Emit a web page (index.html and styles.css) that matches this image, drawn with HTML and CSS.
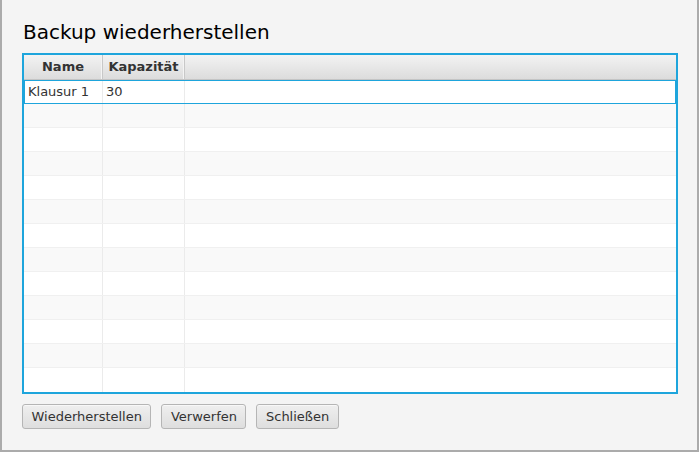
FILE: index.html
```html
<!DOCTYPE html>
<html lang="de">
<head>
<meta charset="utf-8">
<title>Backup wiederherstellen</title>
<link rel="stylesheet" href="styles.css">
</head>
<body>
<div class="window">
  <h1 class="title">Backup wiederherstellen</h1>
  <div class="table">
    <div class="thead">
      <div class="th col-name">Name</div>
      <div class="th col-cap">Kapazität</div>
      <div class="th col-fill"></div>
    </div>
    <div class="tbody">
      <div class="row selected"><div class="td col-name">Klausur 1</div><div class="td col-cap">30</div><div class="td col-fill"></div></div>
      <div class="row odd"><div class="td col-name"></div><div class="td col-cap"></div><div class="td col-fill"></div></div>
      <div class="row"><div class="td col-name"></div><div class="td col-cap"></div><div class="td col-fill"></div></div>
      <div class="row odd"><div class="td col-name"></div><div class="td col-cap"></div><div class="td col-fill"></div></div>
      <div class="row"><div class="td col-name"></div><div class="td col-cap"></div><div class="td col-fill"></div></div>
      <div class="row odd"><div class="td col-name"></div><div class="td col-cap"></div><div class="td col-fill"></div></div>
      <div class="row"><div class="td col-name"></div><div class="td col-cap"></div><div class="td col-fill"></div></div>
      <div class="row odd"><div class="td col-name"></div><div class="td col-cap"></div><div class="td col-fill"></div></div>
      <div class="row"><div class="td col-name"></div><div class="td col-cap"></div><div class="td col-fill"></div></div>
      <div class="row odd"><div class="td col-name"></div><div class="td col-cap"></div><div class="td col-fill"></div></div>
      <div class="row"><div class="td col-name"></div><div class="td col-cap"></div><div class="td col-fill"></div></div>
      <div class="row odd"><div class="td col-name"></div><div class="td col-cap"></div><div class="td col-fill"></div></div>
      <div class="row last"><div class="td col-name"></div><div class="td col-cap"></div><div class="td col-fill"></div></div>
    </div>
  </div>
  <div class="buttons">
    <button class="btn">Wiederherstellen</button>
    <button class="btn">Verwerfen</button>
    <button class="btn">Schließen</button>
  </div>
</div>
</body>
</html>
```

FILE: styles.css
```css
* { box-sizing: border-box; }
html, body {
  margin: 0;
  padding: 0;
  background: #f4f4f4;
}
body {
  font-family: "DejaVu Sans", sans-serif;
  font-size: 13px;
  color: #333333;
}
.window {
  width: 699px;
  height: 452px;
  border-left: 2px solid #ababab;
  border-right: 2px solid #ababab;
  border-bottom: 2px solid #ababab;
  padding: 21px 0 0 20px;
  background: #f4f4f4;
}
.title {
  margin: 0;
  font-size: 20px;
  font-weight: normal;
  line-height: 22px;
  color: #000000;
  padding-left: 1px;
}
.table {
  margin-top: 10px;
  width: 656px;
  height: 341px;
  border: 2px solid #1ea5dc;
  background: #ffffff;
  display: flex;
  flex-direction: column;
}
.thead {
  display: flex;
  height: 25px;
  background: linear-gradient(#f3f3f3, #dcdcdc);
  border-bottom: 1px solid #c4c4c4;
}
.th {
  font-weight: bold;
  color: #333333;
  text-align: center;
  line-height: 24px;
  border-right: 1px solid #c8c8c8;
  box-shadow: inset -1px 0 0 #f4f4f4;
}
.th.col-fill { border-right: none; box-shadow: none; }
.col-name { width: 79px; flex: none; }
.col-cap { width: 82px; flex: none; }
.col-fill { flex: 1; }
.tbody {
  display: flex;
  flex-direction: column;
}
.row {
  display: flex;
  height: 24px;
  background: #ffffff;
  border-bottom: 1px solid #f0f0f0;
}
.row.odd { background: #f9f9f9; }
.row.last { border-bottom: none; }
.td {
  border-right: 1px solid #ebebeb;
  padding-left: 4px;
  line-height: 22px;
  color: #333333;
  white-space: nowrap;
}
.td.col-fill { border-right: none; }
.row.selected {
  border: 1px solid #1ea5dc;
  background: #ffffff;
}
.row.selected .td { line-height: 21px; padding-left: 3px; }
.row.selected .col-name { width: 78px; }
.buttons {
  display: flex;
  gap: 10px;
  margin-top: 10px;
}
.btn {
  font-family: "DejaVu Sans", sans-serif;
  font-size: 13px;
  color: #333333;
  height: 25px;
  padding: 0 8.5px;
  border: 1px solid #b5b5b5;
  border-radius: 3px;
  background: linear-gradient(#efefef, #dedede);
  box-shadow: inset 0 1px 0 #f8f8f8;
  margin: 0;
}
```
